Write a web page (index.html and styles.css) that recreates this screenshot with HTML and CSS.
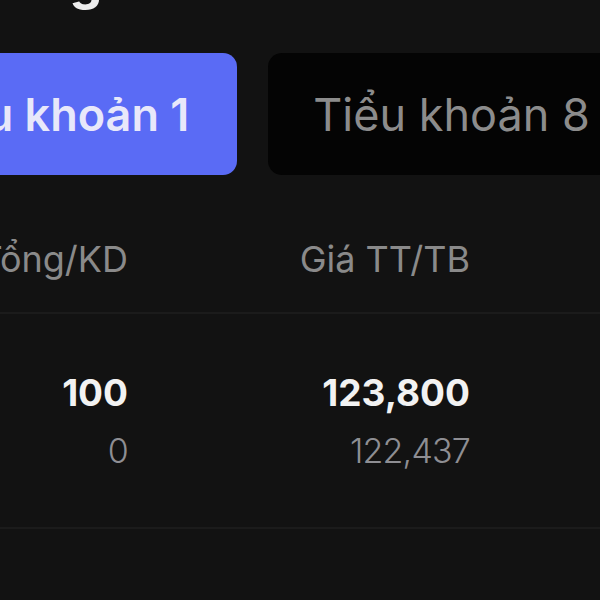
FILE: index.html
```html
<!DOCTYPE html>
<html lang="vi">
<head>
    <meta charset="UTF-8">
    <meta name="viewport" content="width=device-width, initial-scale=1.0">
    <title>Danh mục</title>
    <link rel="stylesheet" href="styles.css">
</head>
<body>
    <div class="page">
        <h1 class="title">Chứng khoán</h1>

        <div class="tabs">
            <div class="tab active">Tiểu khoản 1</div>
            <div class="tab">Tiểu khoản 8</div>
        </div>

        <div class="table">
            <div class="row head">
                <div class="cell">Tổng/KD</div>
                <div class="cell">Giá TT/TB</div>
                <div class="cell">Lãi/Lỗ</div>
            </div>
            <div class="row">
                <div class="cell">
                    <span class="main">100</span>
                    <span class="sub">0</span>
                </div>
                <div class="cell">
                    <span class="main">123,800</span>
                    <span class="sub">122,437</span>
                </div>
                <div class="cell">
                    <span class="main">+136,300</span>
                    <span class="sub">+1.11%</span>
                </div>
            </div>
        </div>
    </div>
</body>
</html>
```

FILE: styles.css
```css
html, body {
    margin: 0;
    background-color: #121212;
    overflow: hidden;
}
body {
    font-family: Inter, "Noto Sans", sans-serif;
    color: #f0f0f0;
}
.page {
    margin-left: -172px;
    padding-left: 42px;
    width: 1100px;
}
.title {
    margin: -49px 0 0;
    padding-left: 62px;
    font-size: 52px;
    line-height: 60px;
    font-weight: 700;
    color: #ededed;
}
.tabs {
    display: flex;
    gap: 31px;
    margin-top: 42px;
}
.tab {
    width: 367px;
    height: 122px;
    border-radius: 14px;
    background-color: #040404;
    color: #8c8c8c;
    font-size: 45px;
    display: flex;
    align-items: center;
    justify-content: center;
}
.tab.active {
    background-color: #5a6bf5;
    color: #e8e8fa;
    font-weight: 600;
}
.table {
    margin-top: 62px;
}
.row {
    display: grid;
    grid-template-columns: 258px 342px 342px;
    border-bottom: 2px solid #1b1b1b;
    padding: 56px 0 54px;
}
.row.head {
    padding: 0 0 31px;
}
.cell {
    display: flex;
    flex-direction: column;
    align-items: flex-end;
    text-align: right;
}
.head .cell {
    font-size: 36px;
    line-height: 44px;
    color: #8a8a8a;
}
.main {
    font-size: 37px;
    line-height: 46px;
    font-weight: 700;
    color: #f2f2f2;
}
.sub {
    margin-top: 13px;
    font-size: 34px;
    line-height: 44px;
    font-weight: 300;
    letter-spacing: -0.8px;
    color: #8e8e93;
}
```
